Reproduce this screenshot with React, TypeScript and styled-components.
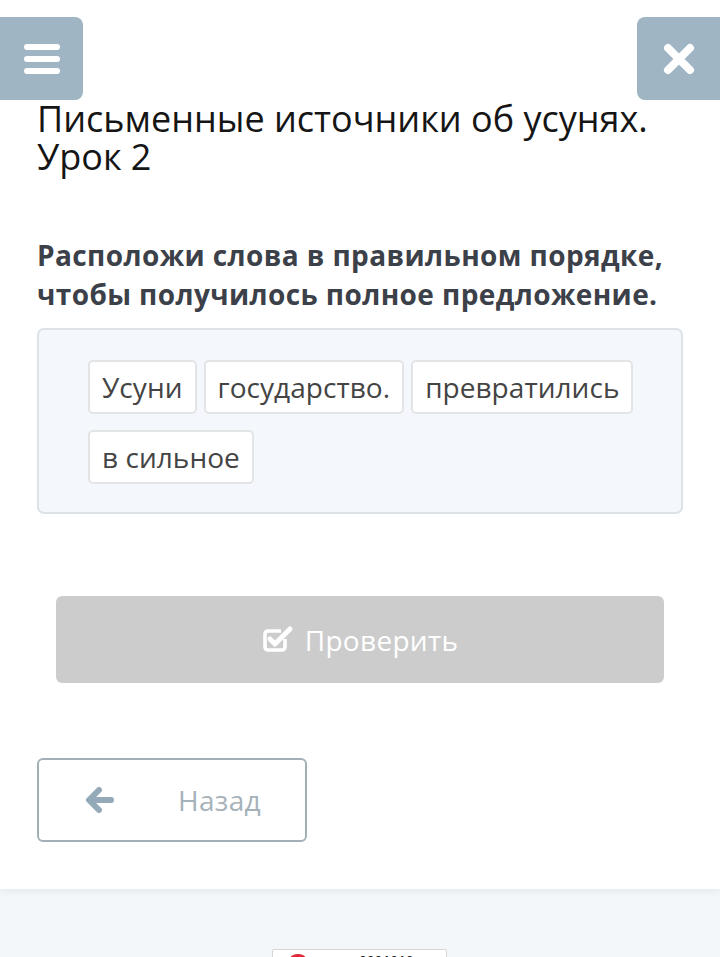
import React from 'react'
import styled, { createGlobalStyle } from 'styled-components'

const GlobalStyle = createGlobalStyle`
  html, body {
    margin: 0;
    padding: 0;
    background: #f4f7f9;
    font-family: "Open Sans", "Noto Sans", sans-serif;
  }
  * { box-sizing: border-box; }
`

const Card = styled.div`
  background: #ffffff;
  padding: 17px 37px 47px;
  box-shadow: 0 2px 8px rgba(0, 0, 0, 0.07);
  position: relative;
`

const TopBar = styled.div`
  display: flex;
  justify-content: space-between;
  margin: 0 -37px;
`

const IconButton = styled.button<{ $side: 'left' | 'right' }>`
  width: 83px;
  height: 83px;
  border: none;
  padding: 0;
  background: #a0b5c3;
  border-radius: ${(p) => (p.$side === 'left' ? '0 8px 8px 0' : '8px 0 0 8px')};
  display: flex;
  align-items: center;
  justify-content: center;
`

const Title = styled.h1`
  margin: 0;
  font-size: 36px;
  line-height: 38px;
  font-weight: 400;
  color: #151515;
`

const Instruction = styled.p`
  margin: 60px 0 14px;
  font-size: 28px;
  line-height: 39px;
  font-weight: 700;
  color: #3b4049;
  letter-spacing: 0.4px;
`

const WordBox = styled.div`
  background: #f4f8fc;
  border: 2px solid #dde2e7;
  border-radius: 7px;
  padding: 30px 40px 28px 49px;
  display: flex;
  flex-wrap: wrap;
  column-gap: 7px;
  row-gap: 16px;
`

const Chip = styled.span`
  height: 54px;
  padding: 0 12px;
  background: #ffffff;
  border: 2px solid #e2e4e6;
  border-radius: 5px;
  display: flex;
  align-items: center;
  font-size: 28px;
  color: #444;
  letter-spacing: 0.05px;
`

const CheckButton = styled.button`
  margin: 82px 19px 0;
  width: calc(100% - 38px);
  height: 87px;
  border: none;
  border-radius: 6px;
  background: #cccccc;
  color: #ffffff;
  font-family: inherit;
  font-size: 28px;
  display: flex;
  align-items: center;
  justify-content: center;
  gap: 11px;
  letter-spacing: 0.3px;
`

const BackButton = styled.button`
  margin-top: 75px;
  width: 270px;
  height: 84px;
  border: 2px solid #a3afb6;
  border-radius: 6px;
  background: #ffffff;
  color: #a6b2ba;
  font-family: inherit;
  font-size: 28px;
  display: flex;
  align-items: center;
  padding: 0 0 0 47px;
  gap: 64px;
  letter-spacing: 0.3px;
`

const Footer = styled.div`
  height: 69px;
  display: flex;
  justify-content: center;
  align-items: flex-start;
  padding: 60px 0 0 0;
  overflow: hidden;
`

const Counter = styled.div`
  width: 175px;
  height: 30px;
  margin-left: -1px;
  background: #ffffff;
  border: 1px solid #d6d6d6;
  border-radius: 2px;
  display: flex;
  align-items: flex-start;
  padding: 4px 10px 0 14px;
  gap: 50px;
  font-family: "Liberation Mono", monospace;
  font-weight: 700;
  font-size: 13px;
  color: #222;
`

const Dot = styled.span`
  width: 22px;
  height: 22px;
  border-radius: 50%;
  background: #e0283a;
`

const Menu = () => (
  <svg width="38" height="32" viewBox="0 0 38 32">
    <g stroke="#fff" strokeWidth="6" strokeLinecap="round">
      <line x1="4" y1="4" x2="34" y2="4" />
      <line x1="4" y1="16" x2="34" y2="16" />
      <line x1="4" y1="28" x2="34" y2="28" />
    </g>
  </svg>
)

const Cross = () => (
  <svg width="32" height="32" viewBox="0 0 32 32">
    <g stroke="#fff" strokeWidth="8" strokeLinecap="round">
      <line x1="5" y1="5" x2="27" y2="27" />
      <line x1="27" y1="5" x2="5" y2="27" />
    </g>
  </svg>
)

const CheckSquare = () => (
  <svg width="32" height="30" viewBox="0 0 32 30">
    <path
      d="M23 14v8a3 3 0 0 1-3 3H6a3 3 0 0 1-3-3V9a3 3 0 0 1 3-3h13"
      fill="none"
      stroke="#fff"
      strokeWidth="3.6"
      strokeLinejoin="round"
    />
    <path d="M8 14l5 5L28 4" fill="none" stroke="#fff" strokeWidth="5" strokeLinecap="round" strokeLinejoin="round" />
  </svg>
)

const ArrowLeft = () => (
  <svg width="28" height="26" viewBox="0 0 28 26">
    <path d="M13 3L3 13l10 10M4 13h21" fill="none" stroke="#95aab8" strokeWidth="6" strokeLinecap="round" strokeLinejoin="round" />
  </svg>
)

const words = ['Усуни', 'государство.', 'превратились', 'в сильное']

export default function App() {
  return (
    <>
      <GlobalStyle />
      <Card>
        <TopBar>
          <IconButton $side="left" aria-label="menu">
            <Menu />
          </IconButton>
          <IconButton $side="right" aria-label="close">
            <Cross />
          </IconButton>
        </TopBar>
        <Title>
          Письменные источники об усунях.
          <br />
          Урок 2
        </Title>
        <Instruction>
          Расположи слова в правильном порядке,
          <br />
          чтобы получилось полное предложение.
        </Instruction>
        <WordBox>
          {words.map((w) => (
            <Chip key={w}>{w}</Chip>
          ))}
        </WordBox>
        <CheckButton>
          <CheckSquare />
          Проверить
        </CheckButton>
        <BackButton>
          <ArrowLeft />
          Назад
        </BackButton>
      </Card>
      <Footer>
        <Counter>
          <Dot />
          0001010
        </Counter>
      </Footer>
    </>
  )
}
